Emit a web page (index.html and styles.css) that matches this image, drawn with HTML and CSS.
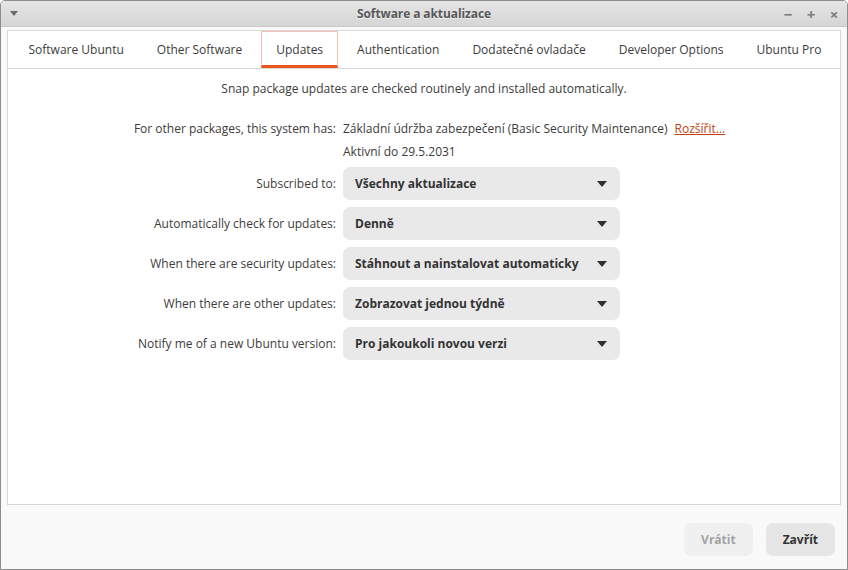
FILE: index.html
```html
<!DOCTYPE html>
<html lang="cs">
  <head>
    <meta charset="UTF-8" />
    <title>Software a aktualizace</title>
    <link rel="stylesheet" href="styles.css">
  </head>
  <body>
    <div class="window">
      <div class="titlebar">
        <span class="menu-arrow"></span>
        <span class="title">Software a aktualizace</span>
        <div class="controls">
          <span class="ctl">&minus;</span>
          <span class="ctl">+</span>
          <span class="ctl">&times;</span>
        </div>
      </div>

      <div class="body">
        <div class="notebook">
          <div class="tabs">
            <div class="tab">Software Ubuntu</div>
            <div class="tab">Other Software</div>
            <div class="tab active">Updates</div>
            <div class="tab">Authentication</div>
            <div class="tab">Dodatečné ovladače</div>
            <div class="tab">Developer Options</div>
            <div class="tab">Ubuntu Pro</div>
          </div>

          <div class="page">
            <p class="note">Snap package updates are checked routinely and installed automatically.</p>

            <div class="form">
              <div class="label">For other packages, this system has:</div>
              <div class="value">Základní údržba zabezpečení (Basic Security Maintenance) <a href="#" class="link">Rozšířit…</a></div>

              <div class="label"></div>
              <div class="value">Aktivní do 29.5.2031</div>

              <div class="label">Subscribed to:</div>
              <div class="combo"><span>Všechny aktualizace</span><i class="caret"></i></div>

              <div class="label">Automatically check for updates:</div>
              <div class="combo"><span>Denně</span><i class="caret"></i></div>

              <div class="label">When there are security updates:</div>
              <div class="combo"><span>Stáhnout a nainstalovat automaticky</span><i class="caret"></i></div>

              <div class="label">When there are other updates:</div>
              <div class="combo"><span>Zobrazovat jednou týdně</span><i class="caret"></i></div>

              <div class="label">Notify me of a new Ubuntu version:</div>
              <div class="combo"><span>Pro jakoukoli novou verzi</span><i class="caret"></i></div>
            </div>
          </div>
        </div>

        <div class="footer">
          <button class="btn" disabled>Vrátit</button>
          <button class="btn primary">Zavřít</button>
        </div>
      </div>
    </div>
  </body>
</html>
```

FILE: styles.css
```css
/* Reset */
body,
p {
  margin: 0;
  padding: 0;
}

body {
  font-family: "Open Sans", "Noto Sans", sans-serif;
  font-size: 12px;
  color: #3c3c3c;
  background-color: #fff;
}

.window {
  width: 848px;
  height: 570px;
  box-sizing: border-box;
  border: 1px solid #8c8c8c;
  border-radius: 5px 5px 0 0;
  display: flex;
  flex-direction: column;
  overflow: hidden;
}

/* Title bar */
.titlebar {
  height: 25px;
  flex: none;
  display: flex;
  align-items: center;
  position: relative;
  background: linear-gradient(#e6e6e6, #d5d5d5);
  border-bottom: 1px solid #c8c8c8;
}

.menu-arrow {
  margin-left: 9px;
  width: 0;
  height: 0;
  border-left: 4px solid transparent;
  border-right: 4px solid transparent;
  border-top: 5px solid #6a6a6a;
}

.title {
  position: absolute;
  left: 0;
  right: 0;
  text-align: center;
  font-weight: bold;
  font-size: 12px;
  letter-spacing: -0.1px;
  color: #585858;
  text-shadow: 0 1px 0 rgba(255, 255, 255, 0.6);
}

.controls {
  margin-left: auto;
  margin-right: 6px;
  display: flex;
  gap: 9px;
  position: relative;
}

.ctl {
  width: 14px;
  text-align: center;
  font-size: 15px;
  font-weight: bold;
  color: #7c7c7c;
  line-height: 14px;
}

/* Body */
.body {
  flex: 1;
  display: flex;
  flex-direction: column;
  background-color: #f9f9f9;
  padding: 3px 6px 0 6px;
}

.notebook {
  height: 473px;
  border: 1px solid #d8d8d8;
  background-color: #fff;
  display: flex;
  flex-direction: column;
}

.tabs {
  display: flex;
  height: 37px;
  padding-left: 4px;
  border-bottom: 1px solid #dadada;
}

.tab {
  flex: none;
  white-space: nowrap;
  padding: 0 14px;
  margin: 0 2.5px;
  display: flex;
  align-items: center;
  color: #3c3c3c;
  box-sizing: border-box;
}

.tab.active {
  border: 1px solid #f1c3b6;
  border-bottom: 3px solid #e95420;
  padding: 2px 14px 0 14px;
}

/* Page */
.page {
  flex: 1;
}

.note {
  margin-top: 11px;
  line-height: 17px;
  text-align: center;
}

.form {
  margin-top: 24px;
  display: grid;
  grid-template-columns: 328px 1fr;
  column-gap: 7px;
  row-gap: 7px;
  align-items: center;
}

.label {
  text-align: right;
  line-height: 16px;
}

.value {
  line-height: 16px;
}

.link {
  margin-left: 4px;
  color: #c34113;
}

.combo {
  width: 277px;
  height: 33px;
  box-sizing: border-box;
  padding: 0 13px 0 12px;
  background-color: #e9e9e9;
  border-radius: 7px;
  display: flex;
  align-items: center;
  justify-content: space-between;
  font-weight: bold;
  color: #333;
}

.caret {
  width: 0;
  height: 0;
  border-left: 5px solid transparent;
  border-right: 5px solid transparent;
  border-top: 6px solid #2e2e2e;
}

/* Footer */
.footer {
  flex: 1;
  display: flex;
  justify-content: flex-end;
  align-items: flex-start;
  gap: 13px;
  padding: 18px 6px 0 0;
}

.btn {
  height: 33px;
  padding: 0 17px;
  border: none;
  border-radius: 7px;
  font-family: inherit;
  font-size: 12px;
  font-weight: bold;
  background-color: #e6e6e6;
  color: #333;
  cursor: pointer;
}

.btn:disabled {
  background-color: #f0f0f0;
  color: #a3a3a3;
  cursor: default;
}
```
